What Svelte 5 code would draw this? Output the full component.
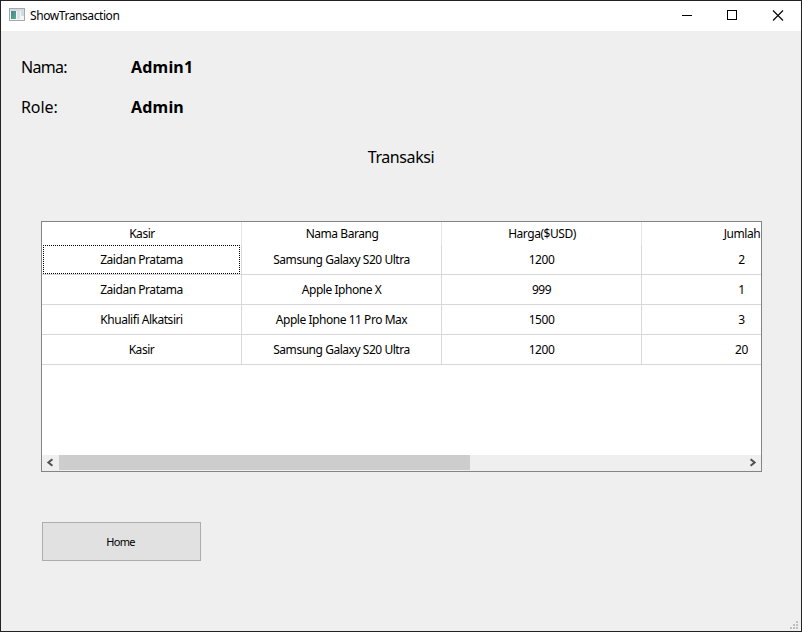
<script>
  const columns = ['Kasir', 'Nama Barang', 'Harga($USD)', 'Jumlah'];
  const rows = [
    ['Zaidan Pratama', 'Samsung Galaxy S20 Ultra', '1200', '2'],
    ['Zaidan Pratama', 'Apple Iphone X', '999', '1'],
    ['Khualifi Alkatsiri', 'Apple Iphone 11 Pro Max', '1500', '3'],
    ['Kasir', 'Samsung Galaxy S20 Ultra', '1200', '20']
  ];
</script>

<div class="window">
  <header>
    <svg class="app" width="16" height="14" viewBox="0 0 16 14" shape-rendering="crispEdges">
      <defs>
        <linearGradient id="pane" x1="0" y1="0" x2="1" y2="1">
          <stop offset="0" stop-color="#4a7fa5" />
          <stop offset="1" stop-color="#58b07c" />
        </linearGradient>
      </defs>
      <rect width="16" height="13" fill="#a4a9ad" />
      <rect x="1" y="1" width="14" height="2" fill="#d5dbe0" />
      <rect x="1" y="3" width="14" height="9" fill="#f3f5f6" />
      <rect x="2" y="3" width="5" height="8" fill="url(#pane)" />
      <rect x="8" y="3" width="3" height="8" fill="#dce2e6" />
      <rect x="12" y="3" width="3" height="5" fill="#d5dce1" />
    </svg>
    <span class="title">ShowTransaction</span>
    <svg class="controls" width="138" height="30" viewBox="0 0 138 30" fill="none" stroke="#000">
      <path d="M19 14.5h10M64.5 9.5h9v9h-9z" shape-rendering="crispEdges" />
      <path d="M110 9.5l10 10M120 9.5l-10 10" stroke-width="1.1" />
    </svg>
  </header>

  <main>
    <dl>
      <div><dt class="name">Nama:</dt><dd>Admin1</dd></div>
      <div><dt>Role:</dt><dd>Admin</dd></div>
    </dl>
    <h1>Transaksi</h1>

    <section class="table">
      <div class="head">
        {#each columns as column}
          <div class="cell"><span>{column}</span></div>
        {/each}
      </div>
      {#each rows as row, r}
        <div class="row">
          {#each row as value, c}
            <div class="cell" class:focused={r === 0 && c === 0}><span>{value}</span></div>
          {/each}
        </div>
      {/each}
      <div class="scroll">
        <svg width="17" height="16" viewBox="0 0 17 16" fill="none" stroke="#505050" stroke-width="2"><path d="M10.4 4.3L6.4 7.5l4 3.2" /></svg>
        <div class="track"><div class="thumb"></div></div>
        <svg width="17" height="16" viewBox="0 0 17 16" fill="none" stroke="#505050" stroke-width="2"><path d="M6.6 4.3l4 3.2-4 3.2" /></svg>
      </div>
    </section>

    <button><span>Home</span></button>
  </main>

  <svg class="grip" width="8" height="8" viewBox="0 0 8 8" fill="#bfbfbf" shape-rendering="crispEdges">
    <path d="M6 0h2v2h-2zM3 3h2v2h-2zM6 3h2v2h-2zM0 6h2v2h-2zM3 6h2v2h-2zM6 6h2v2h-2z" />
  </svg>
</div>

<style>
  :global(body) { margin: 0; }
  .window {
    box-sizing: border-box;
    position: relative;
    width: 802px;
    height: 632px;
    border: 1px solid #222325;
    background: #efefef;
    color: #000;
    font: 12px/16px 'Noto Sans', 'Open Sans', sans-serif;
    overflow: hidden;
  }
  header { display: flex; align-items: center; height: 30px; background: #fff; }
  .app { margin: 0 5px 2px 8px; }
  .title { letter-spacing: -0.42px; }
  .controls { margin-left: auto; }
  main { padding: 16px 40px 0; }
  dl { margin: 0 0 0 -20px; font-size: 16px; line-height: 40px; }
  dl div { display: flex; height: 40px; }
  dt { width: 110px; letter-spacing: -0.1px; }
  .name { letter-spacing: -0.7px; }
  dd { margin: 0; font-weight: 700; letter-spacing: 0.2px; }
  h1 { margin: 10px 0 0; font-size: 16px; line-height: 40px; font-weight: 400; text-align: center; letter-spacing: -0.42px; }
  .table {
    box-sizing: border-box;
    display: flex;
    flex-direction: column;
    width: 721px;
    height: 251px;
    margin-top: 44px;
    border: 1px solid #828487;
    background: #fff;
    overflow: hidden;
    letter-spacing: -0.46px;
  }
  .head, .row { display: flex; flex: none; width: 800px; }
  .head { height: 23px; }
  .row { height: 30px; }
  .cell {
    box-sizing: border-box;
    display: flex;
    align-items: center;
    justify-content: center;
    width: 200px;
    border-right: 1px solid #d8d8d8;
    white-space: nowrap;
  }
  .head .cell { padding-left: 1px; border-color: #e5e5e5; }
  .row .cell { border-bottom: 1px solid #d8d8d8; }
  .focused { position: relative; }
  .focused::after {
    content: '';
    position: absolute;
    inset: 0 1px 0 1px;
    border: 1px dotted #000;
    border-radius: 1px;
  }
  .scroll { display: flex; height: 16px; margin-top: auto; background: #efefef; }
  .track { flex: 1; }
  .thumb { width: 411px; height: 15px; background: #cdcdcd; }
  button {
    display: block;
    box-sizing: border-box;
    width: 159px;
    height: 39px;
    margin: 50px 0 0 1px;
    padding: 0 2px 0 0;
    border: 1px solid #adadad;
    background: #e1e1e1;
    color: #000;
    font: 11px/16px 'Noto Sans', 'Open Sans', sans-serif;
    letter-spacing: -0.75px;
  }
  .grip { position: absolute; right: 3px; bottom: 2px; }
</style>
